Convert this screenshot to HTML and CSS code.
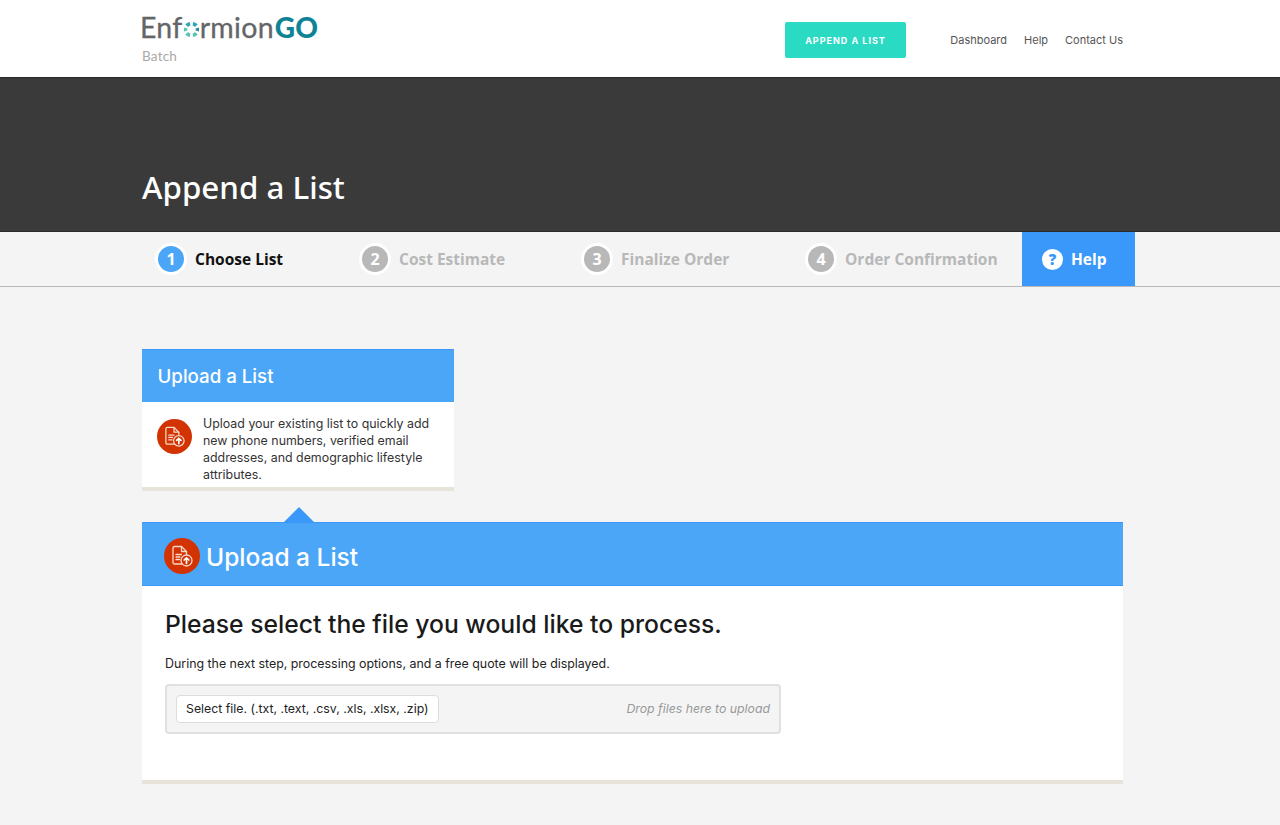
FILE: index.html
```html
<!DOCTYPE html>
<html lang="en">
<head>
<meta charset="utf-8">
<title>Append a List</title>
<link rel="stylesheet" href="styles.css">
</head>
<body>
<header class="topbar">
  <div class="wrap topbar-inner">
    <div class="brand">
      <div class="logo"><span class="logo-name">Enf</span><svg class="logo-ring" viewBox="0 0 20 20"><g fill="none" stroke-width="5"><path d="M3.600 5A8 8 0 0 1 8 2.300" stroke="#2fa6b8"/><path d="M12 2.300A8 8 0 0 1 16.400 5" stroke="#2fa6b8"/><path d="M17.800 8A8 8 0 0 1 17.800 12" stroke="#2d8fa3"/><path d="M16.400 15A8 8 0 0 1 12 17.700" stroke="#5cc4ae"/><path d="M8 17.700A8 8 0 0 1 3.600 15" stroke="#5cc4ae"/><path d="M2.200 12A8 8 0 0 1 2.200 8" stroke="#5cc4ae"/></g></svg><span class="logo-name">rmion</span><span class="logo-go">GO</span></div>
      <div class="brand-sub">Batch</div>
    </div>
    <a class="cta" href="#">APPEND A LIST</a>
    <nav class="nav">
      <a href="#">Dashboard</a>
      <a href="#">Help</a>
      <a href="#">Contact Us</a>
    </nav>
  </div>
</header>

<section class="hero">
  <div class="wrap"><h1>Append a List</h1></div>
</section>

<section class="steps">
  <div class="wrap steps-inner">
    <div class="step step-1 active"><span class="num">1</span><span>Choose List</span></div>
    <div class="step step-2"><span class="num">2</span><span>Cost Estimate</span></div>
    <div class="step step-3"><span class="num">3</span><span>Finalize Order</span></div>
    <div class="step step-4"><span class="num">4</span><span>Order Confirmation</span></div>
    <a class="help" href="#"><span class="help-icon">?</span><span>Help</span></a>
  </div>
</section>

<main class="wrap main">
  <article class="card">
    <h2 class="card-head">Upload a List</h2>
    <div class="card-body">
      <span class="badge badge-sm"><svg viewBox="0 0 24 24" class="doc"><use href="#docicon"/></svg></span>
      <p>Upload your existing list to quickly add new phone numbers, verified email addresses, and demographic lifestyle attributes.</p>
    </div>
  </article>

  <section class="panel">
    <div class="panel-head">
      <span class="badge badge-lg"><svg viewBox="0 0 24 24" class="doc"><use href="#docicon"/></svg></span>
      <h2>Upload a List</h2>
    </div>
    <div class="panel-body">
      <h3>Please select the file you would like to process.</h3>
      <p>During the next step, processing options, and a free quote will be displayed.</p>
      <div class="drop">
        <button class="select" type="button">Select file. (.txt, .text, .csv, .xls, .xlsx, .zip)</button>
        <em>Drop files here to upload</em>
      </div>
    </div>
  </section>
</main>

<svg class="defs" width="0" height="0" aria-hidden="true">
  <symbol id="docicon" viewBox="0 0 24 24">
    <g fill="none" stroke="#f7d9cd" stroke-width="1.300" stroke-linecap="round" stroke-linejoin="round">
      <path d="M11.500 20H4.500A1.500 1.500 0 0 1 3 18.500V4A1.500 1.500 0 0 1 4.500 2.500H11.500L16.500 7.500V10.500"/>
      <path d="M11.500 2.500V7.500H16.500"/>
      <path d="M6 10.500H11.500M6 13H10M6 15.500H9.500"/>
      <circle cx="16.500" cy="16.500" r="5.500"/>
      <path d="M16.500 19.500V13.800M14.200 16L16.500 13.800L18.800 16" stroke="#fff" stroke-width="1.700"/>
    </g>
  </symbol>
</svg>
</body>
</html>
```
FILE: styles.css
```css
* { box-sizing: border-box; }
html, body { margin: 0; padding: 0; }
body {
  background: #f4f4f4;
  font-family: Inter, "Liberation Sans", sans-serif;
  color: #1a1a1a;
  height: 825px;
  overflow: hidden;
}
a { text-decoration: none; color: inherit; }
.wrap { width: 981px; margin-left: 142px; }
.defs { display: block; height: 0; }

.topbar { background: #fff; height: 77px; }
.topbar-inner { display: flex; align-items: flex-start; height: 77px; }
.brand { width: 643px; padding-top: 12px; flex: none; }
.logo { display: flex; align-items: center; height: 31px; line-height: 31px; font-family: Lato, sans-serif; font-size: 28.500px; color: #636567; margin-left: -2px; -webkit-text-stroke: 0.300px #636567; }
.logo-name { letter-spacing: 0.300px; }
.logo-ring { width: 15px; height: 15px; margin: 3px 1px 0 1px; flex: none; }
.logo-go { font-weight: 900; font-size: 28px; color: #0f8396; margin-left: 1px; -webkit-text-stroke: 0; }
.brand-sub { font-family: Lato, sans-serif; font-size: 13.500px; line-height: 17px; color: #a9a9a9; margin-top: 5px; letter-spacing: 0.200px; }
.cta {
  margin-top: 22px;
  flex: none;
  width: 121px; height: 36px;
  background: #2bdac3;
  border-radius: 2px;
  color: #fff;
  font-size: 9px; font-weight: 700; letter-spacing: 1px;
  display: flex; align-items: center; justify-content: center;
}
.nav { margin-left: auto; margin-top: 32px; display: flex; gap: 17px; font-size: 11px; line-height: 16px; color: #555; white-space: nowrap; }

.hero { background: #3a3a3a; height: 155px; border-top: 1px solid #2b2b2b; border-bottom: 1px solid #2b2b2b; }
.hero h1 { margin: 0; padding-top: 89px; font-family: "Noto Sans", sans-serif; font-weight: 500; font-size: 31.300px; line-height: 40px; color: #fff; }

.steps { height: 55px; border-bottom: 1px solid #b9b9b9; background: #f4f4f4; }
.steps-inner { display: flex; height: 54px; }
.step { display: flex; align-items: center; gap: 8px; flex: none; font-family: "Open Sans", sans-serif; font-weight: 700; font-size: 15.500px; color: #b8b8b8; }
.step.active { color: #111; }
.step-1 { margin-left: 13px; width: 204px; }
.step-2 { width: 222px; }
.step-3 { width: 224px; }
.step-4 { width: 217px; }
.num {
  width: 32px; height: 32px; border-radius: 50%;
  background: #b8b8b8; border: 3px solid #fff; color: #fff;
  display: flex; align-items: center; justify-content: center;
  font-size: 16px; flex: none;
}
.active .num { background: #4ca6f7; }
.help {
  flex: none;
  width: 113px; height: 54px;
  background: #3a98fb; color: #fff;
  display: flex; align-items: center; gap: 8px;
  font-family: "Open Sans", sans-serif; font-weight: 700; font-size: 15.500px;
  padding-left: 20px;
}
.help-icon {
  width: 21px; height: 21px; border-radius: 50%; background: #fff; color: #3a98fb;
  display: flex; align-items: center; justify-content: center; font-size: 15px; font-weight: 800;
}

.main { padding-top: 62px; }
.card { width: 312px; background: #fff; border-bottom: 4px solid #e8e3da; height: 142px; }
.card-head {
  margin: 0; height: 53px; background: #4ca6f7; color: #fff; border-top: 1px solid #3a98fb;
  font-size: 18.700px; font-weight: 500; line-height: 53px; padding-left: 15.500px;
}
.card-body { display: flex; gap: 11px; padding: 13px 16px 0 15px; }
.card-body p { margin: 0; font-size: 12.400px; line-height: 17px; color: #333; }
.badge { border-radius: 50%; background: #d23300; display: flex; align-items: center; justify-content: center; flex: none; }
.badge-sm { width: 35px; height: 35px; margin-top: 4px; }
.badge-sm .doc { width: 23px; height: 23px; }
.badge-lg { width: 36px; height: 36px; margin-top: 4px; }
.badge-lg .doc { width: 24px; height: 24px; }

.panel { margin-top: 31px; background: #fff; border-bottom: 4px solid #e8e3da; height: 262px; position: relative; }
.panel::before {
  content: ""; position: absolute; left: 142px; top: -15px;
  border-left: 15px solid transparent; border-right: 15px solid transparent;
  border-bottom: 15px solid #3a98fb;
}
.panel-head {
  height: 64px; background: #4ca6f7; border-top: 1px solid #3a98fb; border-bottom: 1px solid #3a98fb;
  display: flex; align-items: center; padding-left: 22px; gap: 6px;
}
.panel-head h2 { margin: 0; padding-top: 6px; color: #fff; font-size: 24.500px; font-weight: 500; }
.panel-body { padding: 22px 23px 0; }
.panel-body h3 { margin: 0; font-size: 24.700px; font-weight: 500; line-height: 32px; color: #1a1a1a; }
.panel-body p { margin: 16px 0 0; font-size: 12.400px; line-height: 16px; color: #222; }
.drop {
  margin-top: 12px; width: 616px; height: 50px;
  background: #f4f4f4; border: 2px solid #e0e0e0; border-radius: 4px;
  display: flex; align-items: center; justify-content: space-between; padding: 0 9px;
}
.select {
  height: 28px; padding: 0 9px; background: #fff; border: 1px solid #ddd; border-radius: 4px;
  font-family: Inter, sans-serif; font-size: 12.300px; color: #222; margin-bottom: 1px;
}
.drop em { font-size: 12.300px; color: #999; margin-bottom: 1px; }
```
